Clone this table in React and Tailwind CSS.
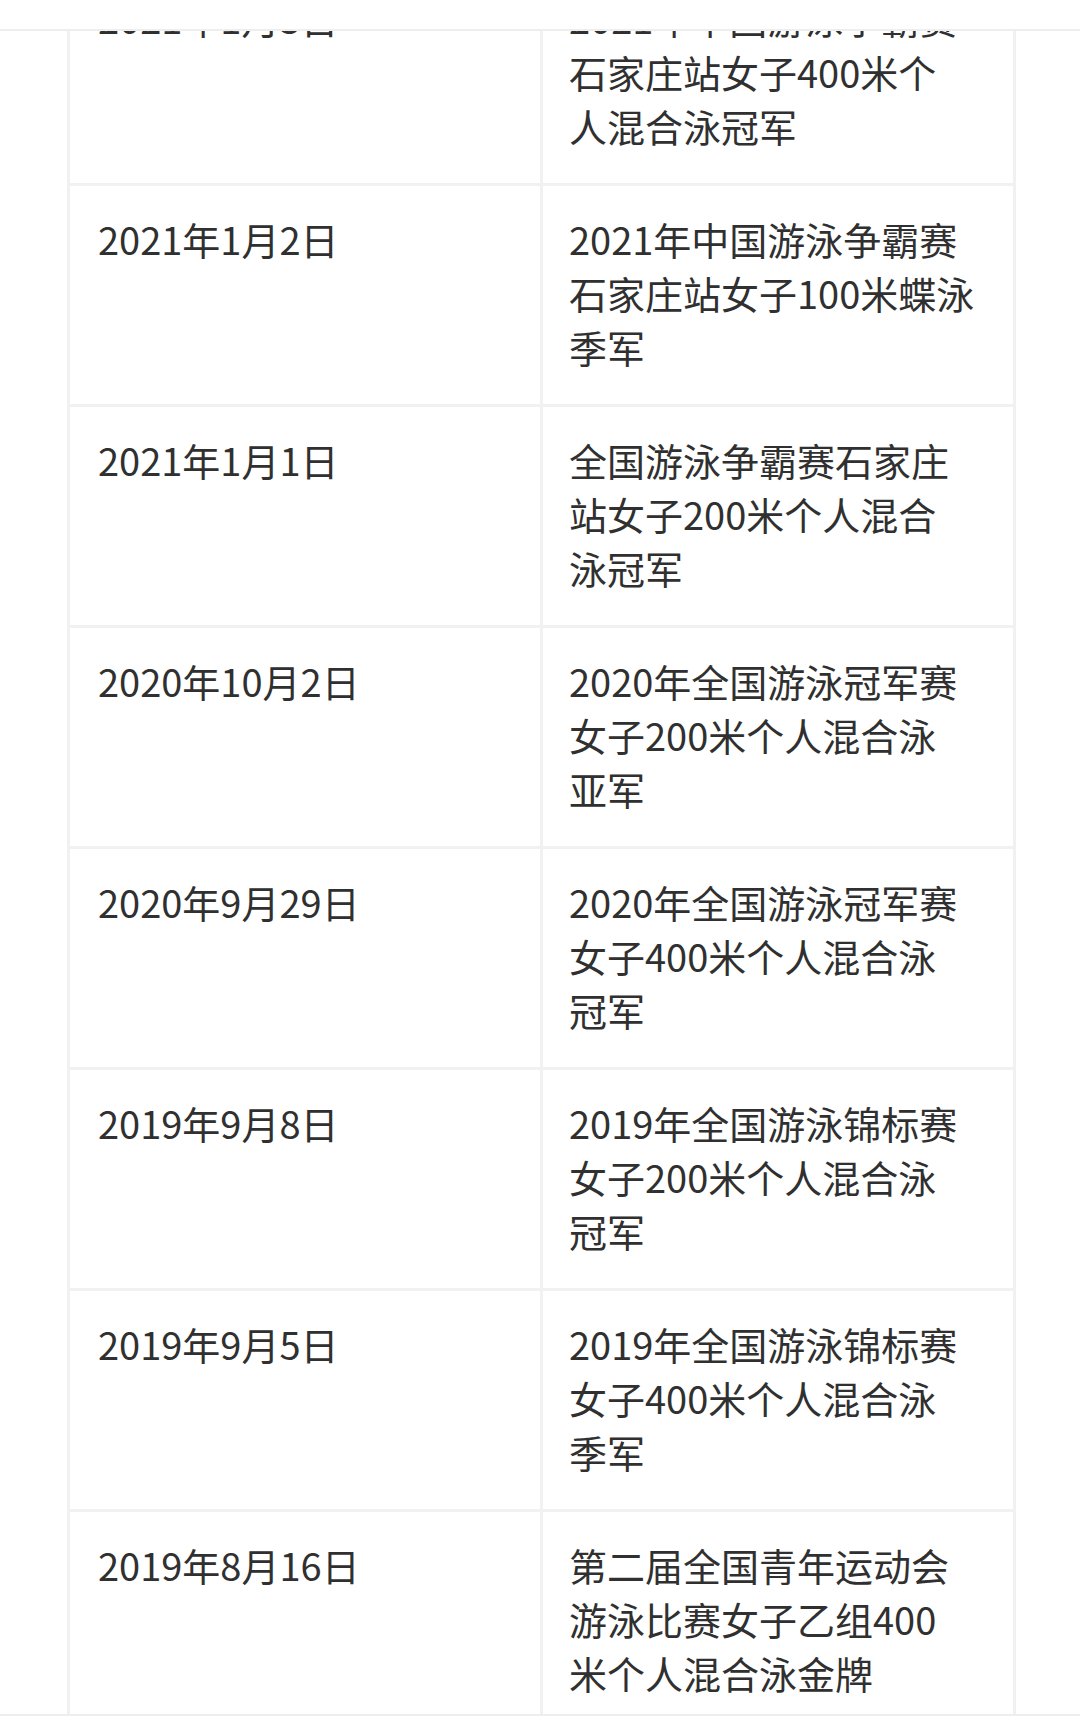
import React from 'react'

const rows = [
  { date: '2021年1月3日', lines: ['2021年中国游泳争霸赛', '石家庄站女子400米个', '人混合泳冠军'] },
  { date: '2021年1月2日', lines: ['2021年中国游泳争霸赛', '石家庄站女子100米蝶泳', '季军'] },
  { date: '2021年1月1日', lines: ['全国游泳争霸赛石家庄', '站女子200米个人混合', '泳冠军'] },
  { date: '2020年10月2日', lines: ['2020年全国游泳冠军赛', '女子200米个人混合泳', '亚军'] },
  { date: '2020年9月29日', lines: ['2020年全国游泳冠军赛', '女子400米个人混合泳', '冠军'] },
  { date: '2019年9月8日', lines: ['2019年全国游泳锦标赛', '女子200米个人混合泳', '冠军'] },
  { date: '2019年9月5日', lines: ['2019年全国游泳锦标赛', '女子400米个人混合泳', '季军'] },
  { date: '2019年8月16日', lines: ['第二届全国青年运动会', '游泳比赛女子乙组400', '米个人混合泳金牌'] },
]

function App() {
  return (
    <div
      className="w-[1080px] h-[1727px] overflow-hidden bg-white text-[#303030]"
      style={{ fontFamily: '"Noto Sans CJK SC", "Noto Sans", sans-serif' }}
    >
      {/* top bar */}
      <div className="h-[31px] bg-white border-b-2 border-[#eeeeee]" />

      {/* scrolled table */}
      <div className="h-[1683px] overflow-hidden">
        <table className="table-fixed border-collapse w-[949px] ml-[67px] -mt-[69px]">
          <tbody>
            {rows.map(row => (
              <tr key={row.date}>
                <td className="w-1/2 align-top border-[3px] border-[#f1f1f1] pl-[28px] pr-[20px] pt-[26px] pb-[30px] text-[38px] leading-[54px]">
                  <div className="whitespace-nowrap">{row.date}</div>
                </td>
                <td className="w-1/2 align-top border-[3px] border-[#f1f1f1] pl-[26px] pr-[10px] pt-[26px] pb-[30px] text-[38px] leading-[54px]">
                  {row.lines.map(line => (
                    <div key={line} className="whitespace-nowrap">{line}</div>
                  ))}
                </td>
              </tr>
            ))}
          </tbody>
        </table>
      </div>

      {/* bottom bar */}
      <div className="h-[13px] bg-white border-t-2 border-[#eeeeee]" />
    </div>
  )
}

export default App
